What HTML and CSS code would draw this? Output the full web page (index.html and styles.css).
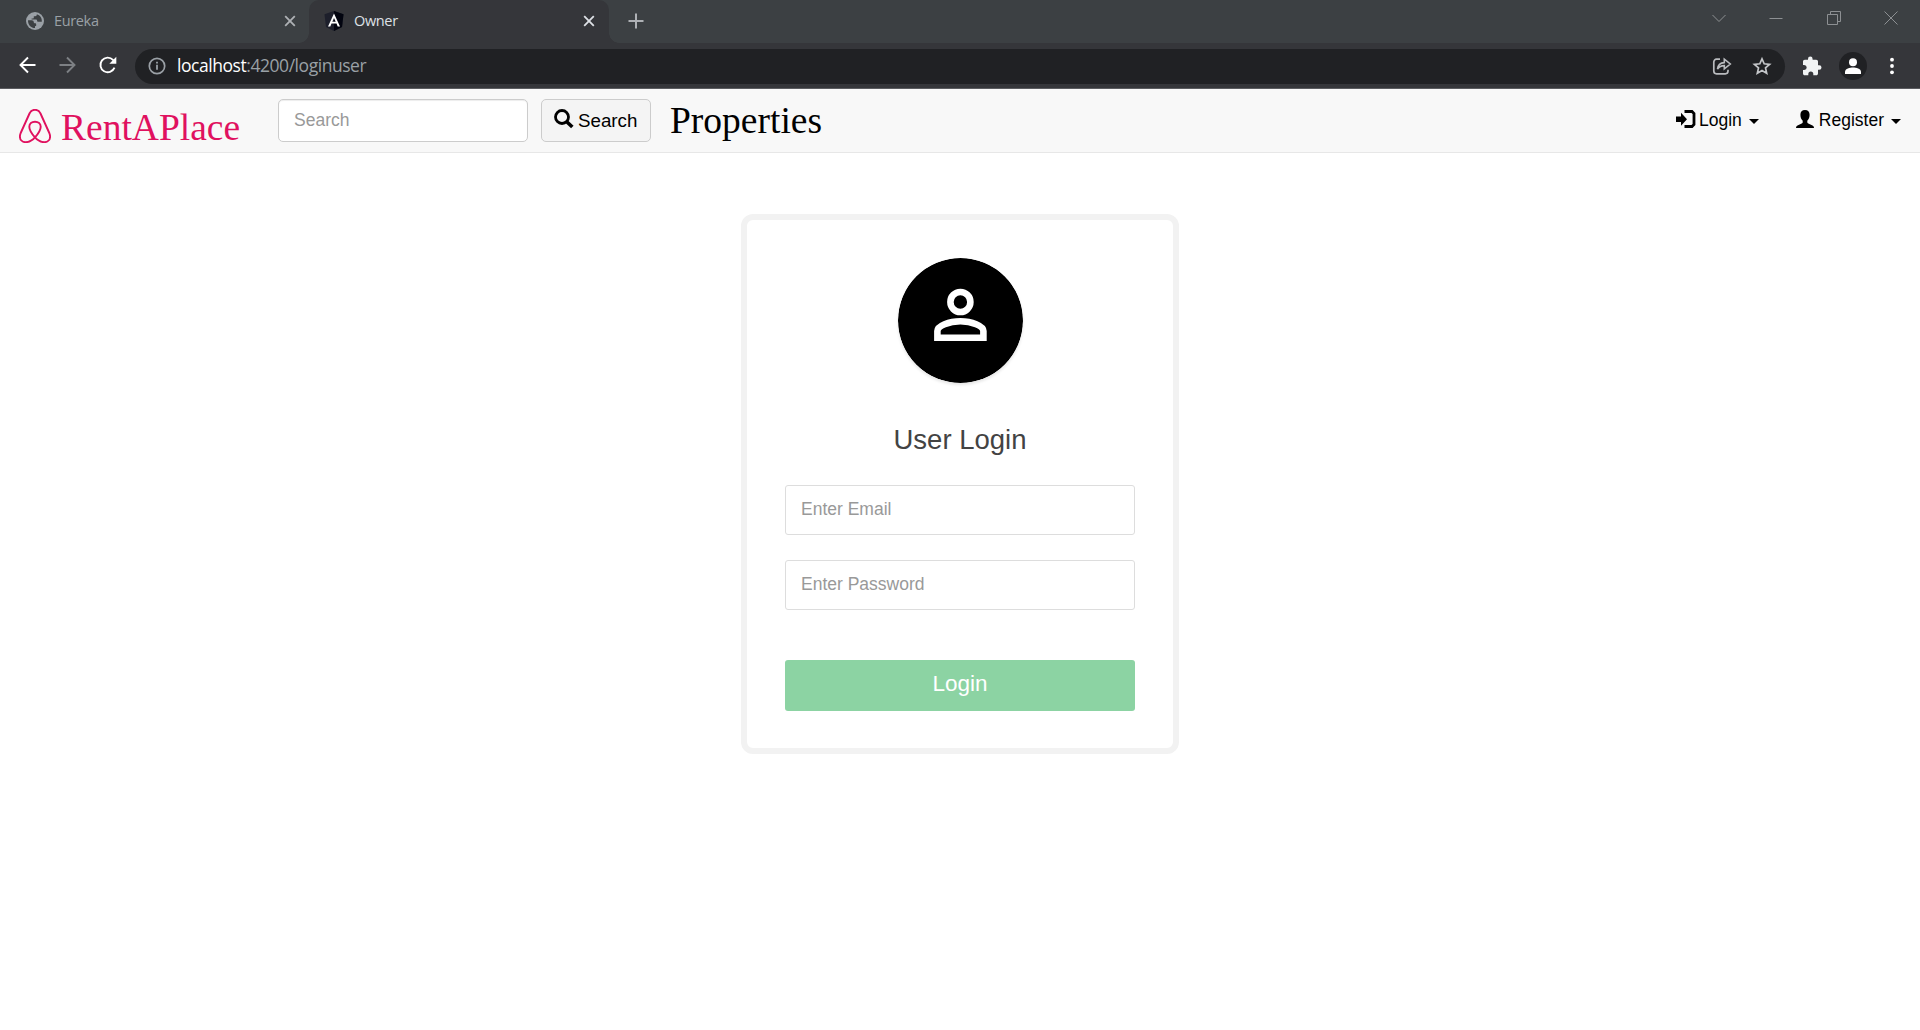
FILE: index.html
```html
<!DOCTYPE html>
<html lang="en">
<head>
<meta charset="utf-8">
<title>Owner</title>
<link rel="stylesheet" href="styles.css">
</head>
<body>
<header class="browser">
  <div class="tabstrip">
    <div class="tab">
      <svg class="favicon" viewBox="0 0 18 18"><circle cx="9" cy="9" r="9" fill="#9aa0a6"/><path d="M2 8.200h3.500c1.600 0 2.300.7 2.300 2 0 .8.500 1 1.300 1 .8 0 1.100.5 1.100 1.300v.8c0 .6-.5.900-1.200.9v1.900C5 16 1.900 13 2 8.200zM10.800 2.200v.6c0 .9-.6 1.400-1.500 1.400H7.800v1.200c0 .7-.4 1.100-1.100 1.100H5.600v1h4c1 0 1.500.5 1.500 1.300 0 .7.500 1 1.200 1h3.500C16.300 6 14 3.200 10.800 2.200z" fill="#3c4043"/></svg>
      <span class="tab-title">Eureka</span>
      <svg class="tab-close" viewBox="0 0 12 12"><path d="M1.200 1.200l9.600 9.600m0-9.600l-9.600 9.600" stroke="#aeb1b5" stroke-width="1.800"/></svg>
    </div>
    <div class="tab tab-active">
      <svg class="favicon angular" viewBox="0 0 20 20"><path d="M10 0l9.500 3.300L18 16l-8 4-8-4L.5 3.300z" fill="#1d1f2b"/><path d="M10 0l9.500 3.300L18 16l-8 4z" fill="#02040f"/><path d="M10 2.500L4 15.500h2.300l1.200-3h5l1.200 3H16zm0 4.400l1.700 3.900H8.300z" fill="#fff"/></svg>
      <span class="tab-title">Owner</span>
      <svg class="tab-close" viewBox="0 0 12 12"><path d="M1.200 1.200l9.600 9.600m0-9.600l-9.600 9.600" stroke="#dee1e6" stroke-width="1.800"/></svg>
    </div>
    <svg class="new-tab" viewBox="0 0 16 16"><path d="M8 .5v15M.5 8h15" stroke="#aeb1b5" stroke-width="2"/></svg>
    <div class="window-controls">
      <svg viewBox="0 0 14 14"><path d="M.5 4l6.500 6.500L13.500 4"/></svg>
      <svg viewBox="0 0 14 14"><path d="M.5 7.500h13"/></svg>
      <svg viewBox="0 0 14 14"><path d="M.5 3.500h10v10H.5zM3.500 3.500v-3h10v10h-3"/></svg>
      <svg viewBox="0 0 14 14"><path d="M.5.5l13 13m0-13l-13 13"/></svg>
    </div>
  </div>
  <div class="toolbar">
    <svg class="nav-icon" viewBox="0 0 20 20"><path d="M18.500 10H4M11 2.500L3.500 10l7.500 7.500" fill="none" stroke="#fff" stroke-width="1.900"/></svg>
    <svg class="nav-icon" viewBox="0 0 20 20"><path d="M2.500 10H17M10 2.500l7.500 7.500-7.500 7.500" fill="none" stroke="#7d8084" stroke-width="1.900"/></svg>
    <svg class="nav-icon" viewBox="0 0 20 20"><path d="M17.500 12.700A7.300 7.300 0 1 1 16 4.900L17.600 6.400" fill="none" stroke="#fff" stroke-width="1.900"/><path d="M19.300 1.700v7h-7z" fill="#fff"/></svg>
    <div class="omnibox">
      <svg class="info" viewBox="0 0 18 18"><circle cx="9" cy="9" r="7.700" fill="none" stroke="#9aa0a6" stroke-width="1.700"/><path d="M9 7.800v5M9 4.800v1.800" stroke="#9aa0a6" stroke-width="1.800"/></svg>
      <span class="url"><b>localhost</b>:4200/loginuser</span>
      <svg class="share" viewBox="0 0 20 20"><path d="M8 3.200H4.500a2.700 2.700 0 0 0-2.700 2.700v9.200a2.700 2.700 0 0 0 2.700 2.700h8.800a2.700 2.700 0 0 0 2.700-2.700v-1.400" fill="none" stroke="#b9bbbe" stroke-width="1.700"/><path d="M5.500 13.200c.4-4.200 2.500-6.400 6.800-6.600V3.200L18.300 8l-6 4.800V9.600C9 9.600 7 10.800 5.500 13.200z" fill="none" stroke="#b9bbbe" stroke-width="1.600"/></svg>
      <svg class="star" viewBox="0 0 20 20"><path d="M10 2.900l2.200 4.900 5.400.5-4.100 3.600 1.200 5.300-4.700-2.800-4.700 2.800 1.200-5.300-4.100-3.600 5.400-.5z" fill="none" stroke="#c3c5c8" stroke-width="1.700"/></svg>
    </div>
    <svg class="puzzle" viewBox="0 0 20 20"><path d="M17.200 9.200H16V5.500c0-1-.8-1.800-1.800-1.800h-3.600V2.900a2.300 2.300 0 0 0-4.600 0v.8H2.800C1.800 3.700 1 4.500 1 5.500V9h1.200a2.500 2.500 0 0 1 0 5H1v3.400c0 1 .8 1.800 1.800 1.800h3.500V18a2.500 2.500 0 0 1 5 0v1.200h2.900c1 0 1.800-.8 1.800-1.800v-3.600h1.200a2.300 2.300 0 0 0 0-4.600z" fill="#f1f3f4"/></svg>
    <svg class="profile" viewBox="0 0 28 28"><circle cx="14" cy="14" r="14" fill="#202124"/><circle cx="14" cy="10.200" r="4" fill="#fff"/><path d="M6 22v-2.200c0-3 5-4.300 8-4.300s8 1.300 8 4.300V22z" fill="#fff"/></svg>
    <svg class="kebab" viewBox="0 0 4 18"><circle cx="2" cy="2.700" r="1.900"/><circle cx="2" cy="9" r="1.900"/><circle cx="2" cy="15.300" r="1.900"/></svg>
  </div>
</header>
<nav class="navbar">
  <a class="brand">
    <svg class="brand-icon" viewBox="0 0 32 34"><path d="M16 28.400C12.400 24.300 10.300 20.700 10.300 17.700C10.300 14.700 12.800 12.700 16 12.700S21.700 14.700 21.700 17.700C21.700 20.700 19.600 24.300 16 28.400C12.600 32.200 9.500 33.200 6.600 33.200C3 33.200.9 30.500.9 27.500C.9 26.300 1.200 25.200 1.700 24L10.500 4.500C11.700 2 13.400.8 16 .8S20.300 2 21.500 4.500L30.300 24C30.800 25.200 31.100 26.300 31.100 27.500C31.100 30.500 29 33.200 25.400 33.200C22.500 33.200 19.400 32.200 16 28.400Z" fill="none" stroke="#e0115f" stroke-width="1.900"/></svg>
    <span>RentAPlace</span>
  </a>
  <input class="search-input" type="text" placeholder="Search">
  <button class="search-button">
    <svg class="glass" viewBox="0 0 20 20"><circle cx="8" cy="8" r="6.500" fill="none" stroke="#000" stroke-width="2.800"/><path d="M12.500 12.500l5.800 5.500" stroke="#000" stroke-width="3.600"/></svg>
    <span>Search</span>
  </button>
  <a class="properties">Properties</a>
  <div class="menus">
    <a class="menu">
      <svg class="menu-icon" viewBox="0 0 20 18"><path d="M0 6.500h5V2.700L11 9.200 5 15.700V12H0z"/><path d="M8.500 1.500h7.500l2 2v11l-2 2H8.500" fill="none" stroke="#000" stroke-width="2.800"/></svg>
      <span>Login</span><i class="caret"></i>
    </a>
    <a class="menu register">
      <svg class="menu-icon user" viewBox="0 0 18 18"><path d="M9 0c3 0 4.600 2 4.600 4.800 0 2.500-.8 4.600-2.300 5.900v1.600c0 .7.400 1 1 1.300l4.200 1.900c1 .5 1.500 1.200 1.500 2.500H0c0-1.300.5-2 1.500-2.500l4.200-1.900c.6-.3 1-.6 1-1.300v-1.600C5.200 9.400 4.400 7.300 4.400 4.800 4.400 2 6 0 9 0z"/></svg>
      <span>Register</span><i class="caret"></i>
    </a>
  </div>
</nav>
<main>
  <form class="card">
    <svg class="avatar" viewBox="0 0 125 125"><circle cx="62.500" cy="62.500" r="62.500"/><circle cx="62.400" cy="44" r="10" fill="none" stroke="#fff" stroke-width="6.600"/><path d="M39.400 79.700V73C39.400 68 51 63.300 62.400 63.300S85.400 68 85.400 73V79.700Z" fill="none" stroke="#fff" stroke-width="6.600"/></svg>
    <h2 class="title">User Login</h2>
    <input class="field" type="text" placeholder="Enter Email">
    <input class="field" type="password" placeholder="Enter Password">
    <button class="submit" type="button">Login</button>
  </form>
</main>
</body>
</html>
```
FILE: styles.css
```css
* { box-sizing: border-box; }
body {
  margin: 0;
  height: 1030px;
  overflow: hidden;
  background: #fff;
  font: 17.5px/25px "Liberation Sans", Arial, sans-serif;
  color: #000;
}
svg { display: block; flex: none; }
input, button { font-family: inherit; margin: 0; }

/* Browser window */
.browser { height: 89px; background: #35363a; border-bottom: 1px solid #5b5c60; font-family: "Open Sans", "Noto Sans", sans-serif; }
.tabstrip { height: 43px; background: #3c4043; display: flex; }
.tab { width: 309px; height: 43px; padding: 0 13px 1px 26px; display: flex; align-items: center; color: #9aa0a6; font-size: 14.5px; }
.tab-active {
  position: relative;
  width: 300px;
  padding-left: 15px;
  padding-right: 14px;
  background: #35363a;
  border-radius: 10px 10px 0 0;
  color: #dee1e6;
}
.tab-active::before, .tab-active::after {
  content: "";
  position: absolute;
  bottom: 0;
  width: 10px;
  height: 10px;
}
.tab-active::before { left: -10px; background: radial-gradient(circle at 0 0, transparent 9.500px, #35363a 10px); }
.tab-active::after { right: -10px; background: radial-gradient(circle at 100% 0, transparent 9.500px, #35363a 10px); }
.favicon { width: 18px; height: 18px; margin-right: 10px; }
.angular { width: 20px; height: 20px; margin-right: 10px; }
.tab-title { flex: 1; margin-top: -1px; letter-spacing: -.35px; }
.tab-close { width: 12px; height: 12px; }
.new-tab { width: 16px; height: 16px; margin: 13px 0 0 19px; }
.window-controls { display: flex; margin: 11px 22px 0 auto; gap: 43.500px; }
.window-controls svg { width: 14px; height: 14px; fill: none; stroke: #8d9093; stroke-width: 1; }
.toolbar { height: 45px; padding: 0 23px 0 17px; display: flex; align-items: center; }
.nav-icon { width: 20px; height: 20px; margin: -1px 20px 0 0; }
.omnibox { width: 1650px; height: 35px; margin: 1px 17px 0 -2px; border-radius: 18px; background: #202124; padding: 0 13px 0 13px; display: flex; align-items: center; }
.info { width: 18px; height: 18px; }
.url { flex: 1; margin: -1px 0 0 11px; font-size: 17.5px; letter-spacing: -.45px; color: #9aa0a6; }
.url b { font-weight: 400; color: #fff; }
.share { width: 20px; height: 20px; margin-right: 20px; }
.star { width: 20px; height: 20px; }
.puzzle { width: 20px; height: 20px; margin-right: 17px; }
.profile { width: 28px; height: 28px; margin-right: 23px; }
.kebab { width: 4px; height: 18px; fill: #fff; }

/* Site navigation */
.navbar { height: 64px; padding: 10px 19px 0 19px; background: #f8f8f8; border-bottom: 1px solid #e7e7e7; display: flex; align-items: flex-start; }
.brand { width: 259px; display: flex; color: #e0115f; font: 37.5px/43px "Liberation Serif", "Times New Roman", serif; }
.brand-icon { width: 32px; height: 34px; margin: 10px 10px 0 0; }
.brand span { margin-top: 7px; }
.search-input {
  width: 250px;
  height: 43px;
  padding: 0 15px;
  border: 1px solid #ccc;
  border-radius: 5px;
  background: #fff;
  box-shadow: inset 0 1px 1px rgba(0, 0, 0, .075);
  font-size: 17.5px;
}
input::placeholder { color: #999; opacity: 1; }
.search-button {
  width: 110px;
  height: 43px;
  margin-left: 13px;
  padding: 0 12px;
  border: 1px solid #ccc;
  border-radius: 5px;
  background: #f4f4f4;
  display: flex;
  align-items: center;
  font-size: 18.75px;
  color: #000;
}
.glass { width: 20px; height: 20px; margin: -3px 4px 0 0; }
.properties { margin-left: 19px; font: 37.5px/43px "Liberation Serif", "Times New Roman", serif; }
.menus { display: flex; margin-left: auto; padding-top: 9px; }
.menu { display: flex; align-items: center; }
.menu-icon { width: 20px; height: 18px; margin: -4px 3px 0 0; }
.user { width: 18px; margin-right: 5px; }
.register { margin-left: 37px; }
.caret { margin: 2px 0 0 7px; border-top: 5px solid #000; border-left: 5px solid transparent; border-right: 5px solid transparent; }

/* Login form */
.card {
  width: 438px;
  height: 540px;
  margin: 61px auto 0;
  padding: 38px 38px 37px;
  border: 6px solid #f2f2f2;
  border-radius: 12px;
  background: #fff;
  display: flex;
  flex-direction: column;
}
.avatar { width: 125px; height: 125px; align-self: center; margin-left: 1px; border-radius: 50%; box-shadow: 0 2px 3px rgba(0, 0, 0, .1); }
.title { margin: 38px 0 27px; font-size: 27.5px; line-height: 37px; font-weight: 400; text-align: center; color: #434343; }
.field { flex: none; width: 350px; height: 50px; margin-bottom: 25px; padding: 0 15px 1px; border: 1px solid #ddd; border-radius: 3px; background: #fff; font-size: 17.5px; }
.submit { flex: none; width: 350px; height: 51px; margin-top: 25px; padding: 0 0 4px; border: 0; border-radius: 3px; background: #8cd3a3; color: #fff; font-size: 22.5px; }
```
